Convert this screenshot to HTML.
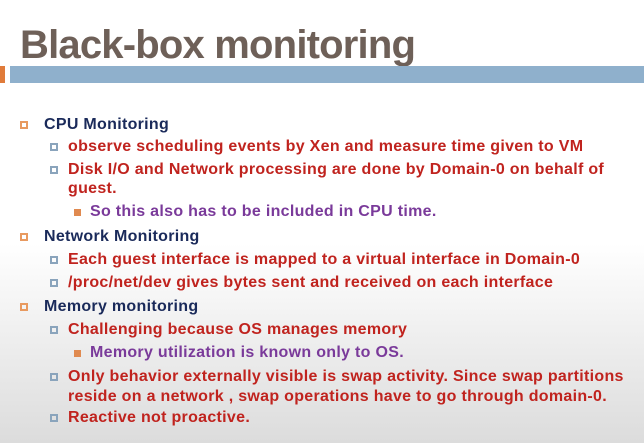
<!DOCTYPE html><html><head><style>
body{margin:0;width:644px;height:443px;overflow:hidden;background:linear-gradient(#fff 0,#fff 55%,#dcdcdc 100%);font-family:"Liberation Sans",sans-serif;position:relative}
.t{position:absolute;left:20px;top:23px;font-size:40px;font-weight:bold;color:#6e6058;letter-spacing:-0.8px}
.bar{position:absolute;left:10px;top:66px;width:634px;height:17px;background:#8fb0cc}
.or{position:absolute;left:0;top:66px;width:5px;height:17px;background:#e07b3a}
.l{position:absolute;font-size:16px;font-weight:bold;white-space:nowrap;line-height:18px;letter-spacing:0.3px}
.a{left:44px;color:#1a2a5a}.b{left:68px;color:#c0231e}.c{left:90px;color:#7a3a9a}
.l:before{content:"";position:absolute;top:5px;box-sizing:border-box}
.a:before{left:-24px;width:8px;height:8px;border:2px solid #e89a60}
.b:before{left:-18px;width:8px;height:8px;border:2px solid #8aa4bc}
.c:before{left:-16px;width:7px;height:7px;background:#e08a50;top:6px}
.n:before{display:none}
</style></head><body>
<div class="t">Black-box monitoring</div><div class="bar"></div><div class="or"></div>
<div class="l a" style="top:116px">CPU Monitoring</div>
<div class="l b" style="top:138px">observe scheduling events by Xen and measure time given to VM</div>
<div class="l b" style="top:161px">Disk I/O and Network processing are done by Domain-0 on behalf of</div>
<div class="l b n" style="top:180px">guest.</div>
<div class="l c" style="top:203px">So this also has to be included in CPU time.</div>
<div class="l a" style="top:228px">Network Monitoring</div>
<div class="l b" style="top:251px">Each guest interface is mapped to a virtual interface in Domain-0</div>
<div class="l b" style="top:274px">/proc/net/dev gives bytes sent and received on each interface</div>
<div class="l a" style="top:298px">Memory monitoring</div>
<div class="l b" style="top:321px">Challenging because OS manages memory</div>
<div class="l c" style="top:344px">Memory utilization is known only to OS.</div>
<div class="l b" style="top:368px">Only behavior externally visible is swap activity. Since swap partitions</div>
<div class="l b n" style="top:388px">reside on a network , swap operations have to go through domain-0.</div>
<div class="l b" style="top:409px">Reactive not proactive.</div>
</body></html>
